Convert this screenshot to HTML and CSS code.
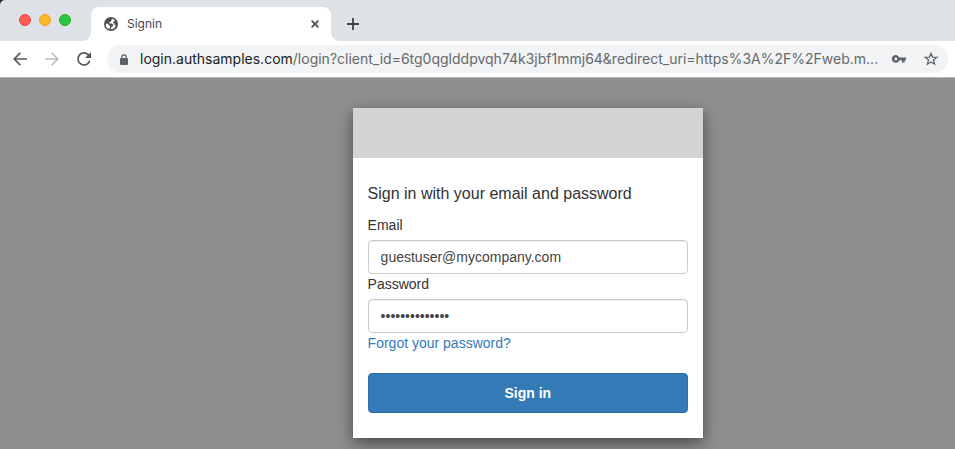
FILE: index.html
```html
<!DOCTYPE html>
<html lang="en">
<head>
<meta charset="utf-8">
<title>Signin</title>
<link rel="stylesheet" href="styles.css">
</head>
<body>
<div class="window">
  <header class="tabstrip">
    <div class="lights"><i class="light red"></i><i class="light yellow"></i><i class="light green"></i></div>
    <div class="tab">
      <svg class="globe" viewBox="0 0 14 14"><circle cx="7" cy="7" r="7" fill="#4c5055"/><path d="M8.600 1.800 7.200 3.200 7.100 4.500 5.300 5.200 5.400 6.500 8 6.600 9.300 7.800 9 9.100 7.500 9.700 6.800 12.300A5.400 5.400 0 0 0 11.900 8.600L10.800 8.300 10.400 6.500 9 5.900 9.200 4.700 10.900 4.300 10.600 3A5.400 5.400 0 0 0 8.600 1.800ZM1.700 6.700A5.400 5.400 0 0 0 5.500 12.200L5.500 10.700 6.300 9.700 5.200 8 3.500 6.800Z" fill="#fff"/></svg>
      <span class="tab-title">Signin</span>
      <svg class="close" viewBox="0 0 8 8"><path d="M.6.6 7.400 7.400M7.400.6.6 7.400" stroke="#45484c" stroke-width="1.600"/></svg>
    </div>
    <svg class="plus" viewBox="0 0 12 12"><path d="M6 0V12M0 6H12" stroke="#3c4043" stroke-width="1.800"/></svg>
  </header>
  <nav class="toolbar">
    <svg class="arrow" viewBox="0 0 14 14"><path d="M14 7H1.500M7.300.8 1.200 7 7.300 13.200" fill="none" stroke="#55585c" stroke-width="1.700"/></svg>
    <svg class="arrow forward" viewBox="0 0 14 14"><path d="M0 7H12.500M6.700.8 12.800 7 6.700 13.200" fill="none" stroke="#babcbe" stroke-width="1.600"/></svg>
    <svg class="reload" viewBox="0 0 14 14"><path d="M12.700 8.700A6 6 0 1 1 11.300 2.800L13 4.500" fill="none" stroke="#55585c" stroke-width="1.700"/><path d="M14 0V6H8Z" fill="#55585c"/></svg>
    <div class="address">
      <svg class="lock" viewBox="0 0 8 11"><path d="M1.800 4.500V3a2.200 2.200 0 0 1 4.400 0V4.500" fill="none" stroke="#5f6368" stroke-width="1.200"/><rect y="4" width="8" height="7" rx="1" fill="#5f6368"/></svg>
      <span class="url"><b>login.authsamples.com</b>/login?client_id=6tg0qglddpvqh74k3jbf1mmj64&amp;redirect_uri=https%3A%2F%2Fweb.m...</span>
      <svg class="key" viewBox="0 0 14 8"><path fill-rule="evenodd" d="M7.400 2.600H14V5.300H12.700V7.600H9.900V5.300H7.400A3.900 3.900 0 1 1 7.400 2.600ZM3.900 2.600A1.400 1.400 0 1 0 3.900 5.400 1.400 1.400 0 0 0 3.900 2.600Z" fill="#5f6368"/></svg>
      <svg class="star" viewBox="0 0 14 14"><path d="M7 1.400 8.500 5.100 12.800 5.400 9.500 8.100 10.600 12.200 7 10 3.400 12.200 4.500 8.100 1.200 5.400 5.500 5.100Z" fill="none" stroke="#5f6368" stroke-width="1.300"/></svg>
    </div>
  </nav>
  <main class="page">
    <section class="modal">
      <div class="banner"></div>
      <form class="form">
        <h1>Sign in with your email and password</h1>
        <label>Email</label>
        <div class="field">guestuser@mycompany.com</div>
        <label>Password</label>
        <div class="field">••••••••••••••</div>
        <a class="forgot">Forgot your password?</a>
        <button type="button">Sign in</button>
      </form>
    </section>
  </main>
</div>
</body>
</html>
```

FILE: styles.css
```css
* { box-sizing: border-box; }
body { margin: 0; background: #222; font-family: "Liberation Sans", Arial, sans-serif; }
svg { display: block; flex: none; overflow: visible; }
.window { height: 449px; display: flex; flex-direction: column; overflow: hidden; border-top-left-radius: 5px; }
.tabstrip { height: 41px; flex: none; background: #dee1e6; display: flex; align-items: flex-end; }
.lights { display: flex; gap: 8px; padding: 0 20px 15px 19px; width: 91px; }
.light { width: 12px; height: 12px; border-radius: 50%; flex: none; }
.red { background: #fc5b57; border: 1px solid #e2463f; }
.yellow { background: #fdb92b; border: 1px solid #e0a028; }
.green { background: #29c73f; border: 1px solid #1dad2b; }
.tab { position: relative; width: 240px; height: 34px; background: #fff; border-radius: 8px 8px 0 0; display: flex; align-items: center; padding: 0 12px 0 13px; }
.tab::before, .tab::after { content: ""; position: absolute; bottom: 0; width: 8px; height: 8px; }
.tab::before { left: -8px; background: radial-gradient(circle at 0 0, transparent 7.5px, #fff 8px); }
.tab::after { right: -8px; background: radial-gradient(circle at 100% 0, transparent 7.5px, #fff 8px); }
.globe { width: 14px; height: 14px; }
.tab-title { font: 12px/16px Inter, sans-serif; color: #45484c; margin-left: 9px; flex: 1; }
.close { width: 8px; height: 8px; }
.plus { width: 12px; height: 12px; margin: 0 0 11px 16px; }
.toolbar { height: 37px; flex: none; background: #fff; display: flex; align-items: center; padding: 0 7px 0 13px; border-bottom: 1px solid #b4b5b6; }
.arrow { width: 14px; height: 14px; }
.forward { margin-left: 18px; }
.reload { width: 14px; height: 14px; margin-left: 18px; }
.address { width: 841px; height: 28px; border-radius: 14px; background: #f1f3f4; margin-left: 16px; display: flex; align-items: center; padding-left: 13px; }
.lock { width: 8px; height: 11px; }
.url { width: 752px; flex: none; margin-left: 12px; font: 14px/20px Inter, sans-serif; color: #66696d; white-space: nowrap; }
.url b { font-weight: 400; color: #202124; }
.key { width: 14px; height: 8px; }
.star { width: 14px; height: 14px; margin-left: 18px; }
.page { flex: 1; min-height: 0; background: #8f8f8f; padding: 30px 0 0 353px; }
.modal { width: 350px; height: 330px; background: #fff; box-shadow: 0 5px 15px rgba(0,0,0,.5); }
.banner { height: 50px; background: #d3d3d3; }
.form { display: flex; flex-direction: column; padding: 25px 15px 0 14.6px; font-size: 14px; line-height: 20px; color: #333; }
h1 { margin: 0 0 10px; font-size: 16px; line-height: 22px; font-weight: 400; }
label { height: 20px; margin-bottom: 5px; }
.field { height: 34px; border: 1px solid #ccc; border-radius: 4px; padding: 6px 12px; color: #444; box-shadow: inset 0 1px 1px rgba(0,0,0,.075); }
.forgot { color: #337ab7; }
button { height: 40px; margin-top: 20px; border: 1px solid #2e6da4; border-radius: 4px; background: #337ab7; color: #fff; font: bold 14px/20px "Liberation Sans", Arial, sans-serif; }
```
